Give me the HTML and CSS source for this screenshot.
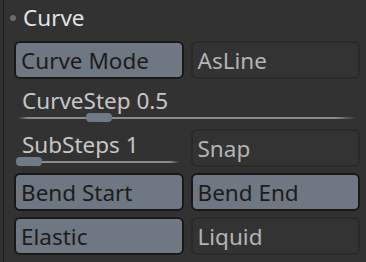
FILE: index.html
```html
<!DOCTYPE html>
<html lang="en">
<head>
    <meta charset="UTF-8">
    <title>Curve</title>
    <link rel="stylesheet" href="styles.css">
</head>
<body>
    <div class="panel">
        <div class="header">
            <span class="dot"></span>
            <span class="title">Curve</span>
        </div>

        <div class="btn on">Curve Mode</div>
        <div class="btn">AsLine</div>

        <div class="slider wide">
            <div class="label">CurveStep <span class="val">0.5</span></div>
            <div class="track">
                <div class="thumb" style="left: 72px"></div>
            </div>
        </div>

        <div class="slider">
            <div class="label">SubSteps <span class="val">1</span></div>
            <div class="track">
                <div class="thumb" style="left: 2px"></div>
            </div>
        </div>
        <div class="btn">Snap</div>

        <div class="btn on">Bend Start</div>
        <div class="btn on">Bend End</div>

        <div class="btn on">Elastic</div>
        <div class="btn">Liquid</div>
    </div>
</body>
</html>
```

FILE: styles.css
```css
body {
    margin: 0;
    background-color: #323232;
    font-family: "Noto Sans", "Open Sans", sans-serif;
    font-size: 22.5px;
}

.panel {
    margin-left: 3px;
    border-left: 1px solid #1e1e1e;
    padding: 0 6px 8px 10px;
    height: 254px;
    display: grid;
    grid-template-columns: 1fr 1fr;
    grid-template-rows: 35px 38px 38px 38px 38px 38px;
    column-gap: 7px;
    row-gap: 6px;
}

.header {
    grid-column: span 2;
    display: flex;
    align-items: center;
    margin-left: -4px;
    gap: 7px;
}

.dot {
    width: 6px;
    height: 6px;
    border-radius: 50%;
    background-color: #6a6a6a;
}

.title {
    color: #e2e2e2;
}

/* buttons */
.btn {
    display: flex;
    align-items: center;
    padding: 0 5px;
    border: 2px solid #2a2a2a;
    border-radius: 6px;
    color: #b4b4b4;
    background-color: #333333;
}

.btn.on {
    background-color: #6f7882;
    border-color: #181818;
    color: #1c1c1c;
}

/* sliders */
.slider.wide {
    grid-column: span 2;
}

.label {
    padding: 3px 0 0 8px;
    line-height: 25px;
    color: #c6c6c6;
}

.track {
    position: relative;
    height: 10px;
    margin: 0 4px;
    background: linear-gradient(to right, transparent, #8a8a8a 3%, #8a8a8a 94%, transparent) no-repeat center / 100% 2px;
}

.thumb {
    position: absolute;
    top: 0;
    margin-left: -4px;
    width: 26px;
    height: 9px;
    border-radius: 4px;
    background-color: #6f7a85;
}
```
